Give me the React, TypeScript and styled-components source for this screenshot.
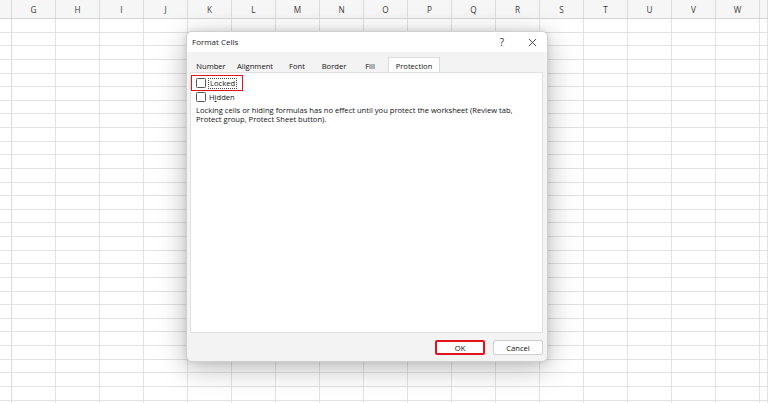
import React from "react";
import styled, { createGlobalStyle } from "styled-components";

const columns = ["G", "H", "I", "J", "K", "L", "M", "N", "O", "P", "Q", "R", "S", "T", "U", "V", "W"];
const rowCount = 29;

const tabs = [
  { label: "Number", width: 42 },
  { label: "Alignment", width: 46 },
  { label: "Font", width: 38 },
  { label: "Border", width: 36 },
  { label: "Fill", width: 36 },
  { label: "Protection", width: 52, active: true },
];

const App = () => {
  return (
    <Page>
      <GlobalStyle />
      <Sheet>
        <HeaderRow>
          <EdgeCell />
          {columns.map((c) => (
            <HeaderCell key={c}>{c}</HeaderCell>
          ))}
          <HeaderCell $rest />
        </HeaderRow>
        {Array.from({ length: rowCount }).map((_, r) => (
          <Row key={r}>
            <EdgeCell />
            {columns.map((c) => (
              <Cell key={c} />
            ))}
            <Cell $rest />
          </Row>
        ))}
      </Sheet>

      <Dialog>
        <TitleBar>
          <Title>Format Cells</Title>
          <TitleButtons>
            <TitleButton>?</TitleButton>
            <TitleButton>
              <svg width="9" height="9" viewBox="0 0 10 10">
                <path d="M1 1 L9 9 M9 1 L1 9" stroke="#333" strokeWidth="1" fill="none" />
              </svg>
            </TitleButton>
          </TitleButtons>
        </TitleBar>
        <Body>
          <TabStrip>
            {tabs.map((t) => (
              <Tab key={t.label} $active={t.active} $width={t.width}>
                {t.label}
              </Tab>
            ))}
          </TabStrip>
          <Panel>
            <Option>
              <Highlight>
                <Box />
                <FocusLabel>Locked</FocusLabel>
              </Highlight>
            </Option>
            <Option $plain>
              <Box />
              <span>
                H<u>i</u>dden
              </span>
            </Option>
            <Note>
              Locking cells or hiding formulas has no effect until you protect the worksheet (Review tab,
              <br />
              Protect group, Protect Sheet button).
            </Note>
          </Panel>
          <Footer>
            <Button $marked>OK</Button>
            <Button>Cancel</Button>
          </Footer>
        </Body>
      </Dialog>
    </Page>
  );
};

export default App;

const GlobalStyle = createGlobalStyle`
  html, body {
    margin: 0;
    padding: 0;
    background: #ffffff;
    overflow: hidden;
  }
`;

const Page = styled.div`
  position: relative;
  width: 768px;
  height: 403px;
  overflow: hidden;
  font-family: "Open Sans", "Noto Sans", sans-serif;
  background: #ffffff;
`;

const Sheet = styled.div`
  display: flex;
  flex-direction: column;
`;

const HeaderRow = styled.div`
  display: flex;
  height: 19px;
  background: #f6f6f6;
  border-bottom: 1px solid #d4d4d4;
  box-sizing: border-box;
`;

const Row = styled.div`
  display: flex;
  height: 13.64px;
  border-bottom: 1px solid #e2e2e2;
  box-sizing: border-box;
`;

const EdgeCell = styled.div`
  width: 12px;
  flex: none;
  border-right: 1px solid #d9d9d9;
  box-sizing: border-box;
`;

const HeaderCell = styled.div<{ $rest?: boolean }>`
  width: 44px;
  flex: ${(p) => (p.$rest ? "1" : "none")};
  border-right: 1px solid #dcdcdc;
  box-sizing: border-box;
  display: flex;
  align-items: center;
  justify-content: center;
  font-size: 8.2px;
  color: #3a3a3a;
`;

const Cell = styled.div<{ $rest?: boolean }>`
  width: 44px;
  flex: ${(p) => (p.$rest ? "1" : "none")};
  border-right: 1px solid #e2e2e2;
  box-sizing: border-box;
`;

const Dialog = styled.div`
  position: absolute;
  left: 186px;
  top: 31px;
  width: 362px;
  height: 331px;
  border-radius: 6px;
  background: #f3f3f3;
  border: 1px solid #d0d0d0;
  box-sizing: border-box;
  box-shadow: 0 6px 28px rgba(0, 0, 0, 0.28), 0 0 6px rgba(0, 0, 0, 0.1);
  display: flex;
  flex-direction: column;
  overflow: hidden;
`;

const TitleBar = styled.div`
  height: 20px;
  flex: none;
  background: #ffffff;
  display: flex;
  align-items: center;
  justify-content: space-between;
  padding: 0 6px 0 5px;
`;

const Title = styled.div`
  font-size: 8px;
  color: #1a1a1a;
  margin-top: -1px;
`;

const TitleButtons = styled.div`
  display: flex;
  align-items: center;
  gap: 12px;
`;

const TitleButton = styled.div`
  width: 18px;
  height: 14px;
  display: flex;
  align-items: center;
  justify-content: center;
  font-size: 10px;
  color: #333;
`;

const Body = styled.div`
  flex: 1;
  display: flex;
  flex-direction: column;
  padding: 5px 4px 0 3px;
`;

const TabStrip = styled.div`
  display: flex;
  height: 15px;
  flex: none;
`;

const Tab = styled.div<{ $active?: boolean; $width: number }>`
  flex: none;
  width: ${(p) => p.$width}px;
  display: flex;
  align-items: center;
  justify-content: center;
  padding-top: 1px;
  font-size: 7.6px;
  color: #111;
  background: ${(p) => (p.$active ? "#ffffff" : "transparent")};
  border: ${(p) => (p.$active ? "1px solid #dadada" : "1px solid transparent")};
  border-bottom: none;
  box-sizing: border-box;
`;

const Panel = styled.div`
  height: 261px;
  flex: none;
  width: 353px;
  background: #ffffff;
  border: 1px solid #e0e0e0;
  box-sizing: border-box;
  padding: 2px 0 0 0;
`;

const Option = styled.div<{ $plain?: boolean }>`
  display: flex;
  align-items: center;
  gap: 3px;
  height: ${(p) => (p.$plain ? "12px" : "16px")};
  padding-left: ${(p) => (p.$plain ? "5px" : "0")};
  font-size: 7.6px;
  color: #111;
`;

const Highlight = styled.div`
  display: flex;
  align-items: center;
  gap: 3px;
  height: 16px;
  width: 52px;
  padding-left: 4px;
  border: 1.5px solid #e0141e;
  box-sizing: border-box;
`;

const Box = styled.div`
  width: 8px;
  height: 8px;
  border: 1px solid #555;
  border-radius: 1.5px;
  background: #fff;
  flex: none;
`;

const FocusLabel = styled.span`
  outline: 1px dotted #444;
  padding: 0 1px;
  line-height: 9px;
`;

const Note = styled.div`
  margin-top: 3px;
  padding-left: 5px;
  font-size: 7.6px;
  line-height: 9px;
  color: #111;
`;

const Footer = styled.div`
  display: flex;
  justify-content: flex-end;
  gap: 8px;
  padding: 7px 0 0 0;
`;

const Button = styled.div<{ $marked?: boolean }>`
  width: 50px;
  height: 15px;
  box-sizing: border-box;
  display: flex;
  align-items: center;
  justify-content: center;
  font-size: 7.6px;
  color: #111;
  background: #fdfdfd;
  border-radius: 2px;
  border: ${(p) => (p.$marked ? "2px solid #e0141e" : "1px solid #cfcfcf")};
`;
